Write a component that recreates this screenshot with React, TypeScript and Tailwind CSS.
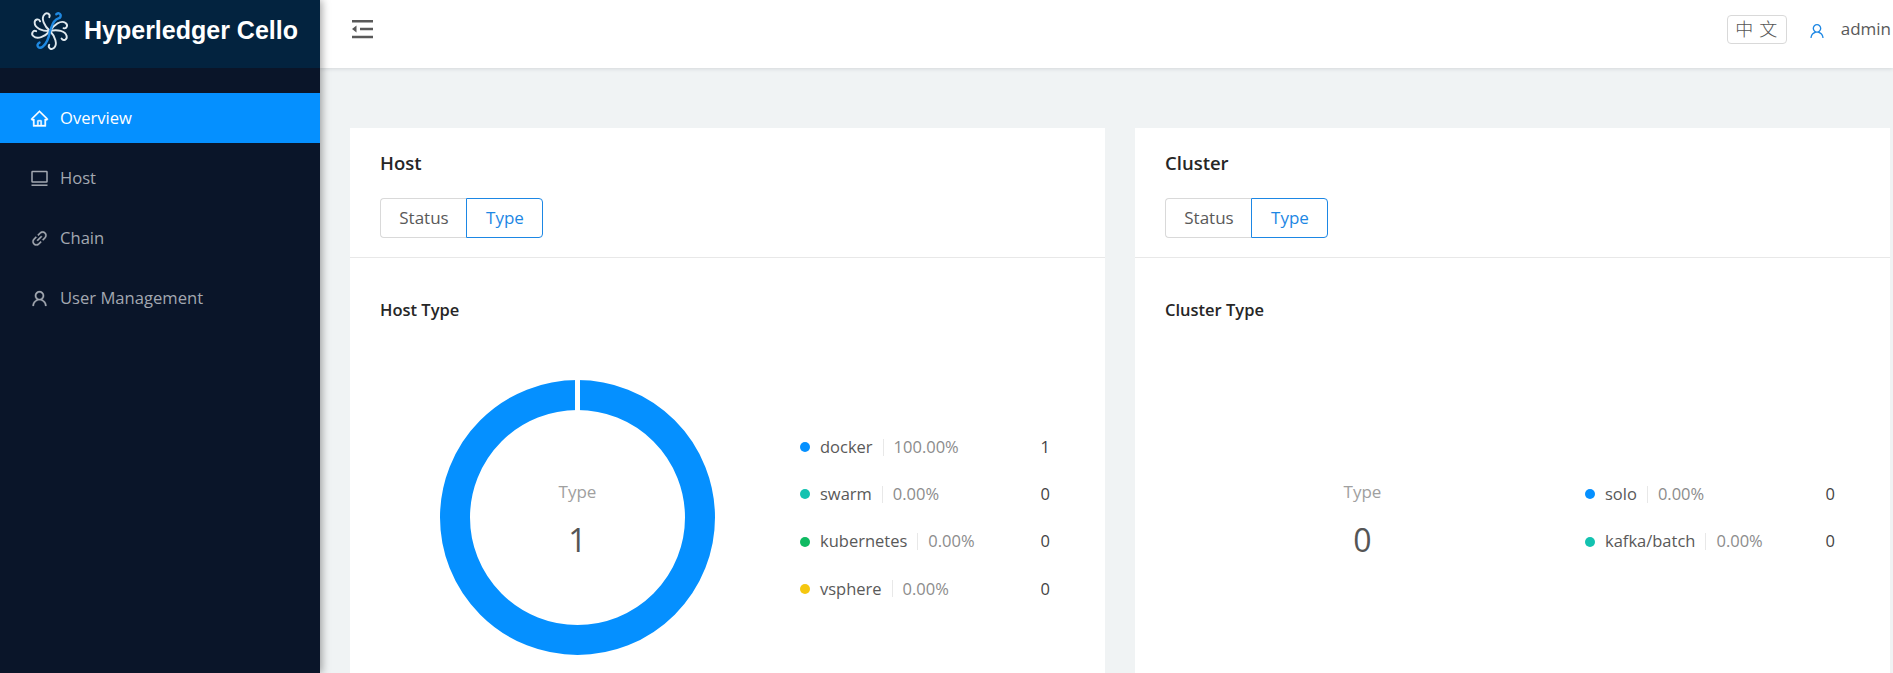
import { AiOutlineHome, AiOutlineLink, AiOutlineUser } from 'react-icons/ai';

function LaptopIcon({ className }: { className?: string }) {
  return (
    <svg width="19" height="19" viewBox="0 0 19 19" fill="none" stroke="currentColor" strokeWidth="1.5" className={className}>
      <rect x="2" y="2.5" width="15" height="10.5" rx="0.5" />
      <path d="M1.5 16.2h16" />
    </svg>
  );
}

function FoldIcon() {
  return (
    <svg width="22" height="20" viewBox="0 0 22 20" fill="none" stroke="#595959" strokeWidth="2.4">
      <path d="M0 2.2h21M8 10h13M0 18h21" />
      <path d="M4.5 6.5v7L0 10z" fill="#595959" stroke="none" />
    </svg>
  );
}

const menu = [
  { label: 'Overview', icon: AiOutlineHome, iconClass: 'stroke-current stroke-[20] text-[19px]', active: true },
  { label: 'Host', icon: LaptopIcon, iconClass: '' },
  { label: 'Chain', icon: AiOutlineLink, iconClass: 'stroke-current stroke-[20] text-[19px]' },
  { label: 'User Management', icon: AiOutlineUser, iconClass: 'stroke-current stroke-[20] text-[19px]' },
];

const hostLegend = [
  { name: 'docker', pct: '100.00%', value: 1, dot: 'bg-[#0590ff]' },
  { name: 'swarm', pct: '0.00%', value: 0, dot: 'bg-[#13c2b0]' },
  { name: 'kubernetes', pct: '0.00%', value: 0, dot: 'bg-[#0fba62]' },
  { name: 'vsphere', pct: '0.00%', value: 0, dot: 'bg-[#f5c70f]' },
];

const clusterLegend = [
  { name: 'solo', pct: '0.00%', value: 0, dot: 'bg-[#0590ff]' },
  { name: 'kafka/batch', pct: '0.00%', value: 0, dot: 'bg-[#13c2b0]' },
];

function Logo() {
  const arm = 'M20 20 C 24 14, 31 10, 35 13 C 38 15, 36 19, 33 18';
  return (
    <svg width="42" height="42" viewBox="0 0 40 40" fill="none" className="shrink-0">
      {[-3, 42, 102, 188, 233, 276].map((a) => (
        <path key={a} d={arm} transform={`rotate(${a} 20 20)`} stroke="#dfe8ee" strokeWidth="1.8" strokeLinecap="round" />
      ))}
      <path d="M26 4 C 30 1, 32 7, 28 8 C 22 10, 22 16, 20 20 C 19 26, 17 32, 13 35 C 9 38, 6 33, 10 31" stroke="#1f88e0" strokeWidth="2.3" strokeLinecap="round" />
    </svg>
  );
}

function Sidebar() {
  return (
    <aside className="z-10 flex w-[320px] shrink-0 flex-col bg-[#0a1529] shadow-[2px_0_8px_rgba(0,0,0,0.35)]">
      <div className="flex h-[68px] items-center gap-[13px] bg-[#03233f] pb-[6px] pl-[29px]">
        <Logo />
        <span className="font-['Liberation_Sans'] text-[25px] font-bold text-white">Hyperledger Cello</span>
      </div>
      <nav className="mt-[25px] flex flex-col gap-[10px]">
        {menu.map((item) => (
          <div
            key={item.label}
            className={`flex h-[50px] items-center gap-[11px] pl-[30px] text-[16.6px] ${
              item.active ? 'bg-[#0590ff] text-white' : 'text-[#a3a8b1]'
            }`}
          >
            <item.icon className={item.iconClass} />
            <span>{item.label}</span>
          </div>
        ))}
      </nav>
    </aside>
  );
}

function Legend({ rows }: { rows: typeof hostLegend }) {
  return (
    <div className="mt-[1px] flex w-[250px] flex-col">
      {rows.map((row) => (
        <div key={row.name} className="flex h-[47.3px] items-center text-[16.5px]">
          <span className={`mr-[10px] h-[10px] w-[10px] rounded-full ${row.dot}`} />
          <span className="text-[#595959]">{row.name}</span>
          <span className="mx-[10px] h-[17px] w-px bg-[#e8e8e8]" />
          <span className="text-[#8c8c8c]">{row.pct}</span>
          <span className="ml-auto text-[#444]">{row.value}</span>
        </div>
      ))}
    </div>
  );
}

function Donut({ total, ring }: { total: number; ring: boolean }) {
  return (
    <div className="relative h-[275px] w-[275px] shrink-0">
      {ring && (
        <svg width="275" height="275" viewBox="0 0 275 275">
          <circle cx="137.5" cy="137.5" r="122.5" fill="none" stroke="#0590ff" strokeWidth="30" />
          <rect x="135" y="0" width="5" height="32" fill="#fff" />
        </svg>
      )}
      <div className="absolute inset-0 flex flex-col items-center justify-center pt-[7px]">
        <span className="text-[17px] leading-[23px] text-[#a0a0a0]">Type</span>
        <span className="mt-[14px] text-[32px] leading-[45px] text-[#555]">{total}</span>
      </div>
    </div>
  );
}

function Card({
  title,
  subtitle,
  rows,
  total,
  ring,
  className,
}: {
  title: string;
  subtitle: string;
  rows: typeof hostLegend;
  total: number;
  ring: boolean;
  className: string;
}) {
  return (
    <section className={`bg-white ${className}`}>
      <div className="h-[130px] border-b border-[#e8e8e8] px-[30px] pt-[21px]">
        <h2 className="text-[18.5px] leading-[28px] font-semibold text-[#262626]">{title}</h2>
        <div className="mt-[21px] flex h-[40px] text-[17px]">
          <div className="flex w-[86px] items-center justify-center rounded-l-[4px] border border-r-0 border-[#d9d9d9] pl-[1px] text-[#595959]">
            Status
          </div>
          <div className="flex w-[77px] items-center justify-center rounded-r-[4px] border border-[#1d87e4] pl-[1px] text-[#1d87e4]">
            Type
          </div>
        </div>
      </div>
      <div className="px-[30px] pt-[39px]">
        <h3 className="text-[16.5px] leading-[26px] font-semibold text-[#262626]">{subtitle}</h3>
        <div className="mt-[57px] flex items-center">
          <div className="mr-[85px] ml-[60px]">
            <Donut total={total} ring={ring} />
          </div>
          <Legend rows={rows} />
        </div>
      </div>
    </section>
  );
}

export default function App() {
  return (
    <div className="flex h-screen overflow-hidden bg-[#f0f3f4] font-['Open_Sans',sans-serif]">
      <Sidebar />
      <main className="flex min-w-0 grow flex-col">
        <header className="flex h-[68px] shrink-0 items-center justify-between bg-white pr-[2px] pb-[10px] pl-[32px] shadow-[0_1px_4px_rgba(0,21,41,0.12)]">
          <FoldIcon />
          <div className="flex items-center">
            <span className="flex h-[29px] w-[60px] items-center justify-center rounded-[4px] border border-[#d9d9d9] pb-[2px] font-['Noto_Sans_CJK_SC',sans-serif] text-[18px] font-light tracking-[1px] text-[#555]">
              中 文
            </span>
            <AiOutlineUser className="mt-[3px] ml-[21px] text-[18px] text-[#1d87e4]" />
            <span className="ml-[15px] text-[17px] text-[#595959]">admin</span>
          </div>
        </header>
        <div className="flex grow gap-[30px] pt-[60px] pr-[3px] pl-[30px]">
          <Card title="Host" subtitle="Host Type" rows={hostLegend} total={1} ring className="w-[755px] shrink-0" />
          <Card title="Cluster" subtitle="Cluster Type" rows={clusterLegend} total={0} ring={false} className="grow" />
        </div>
      </main>
    </div>
  );
}
